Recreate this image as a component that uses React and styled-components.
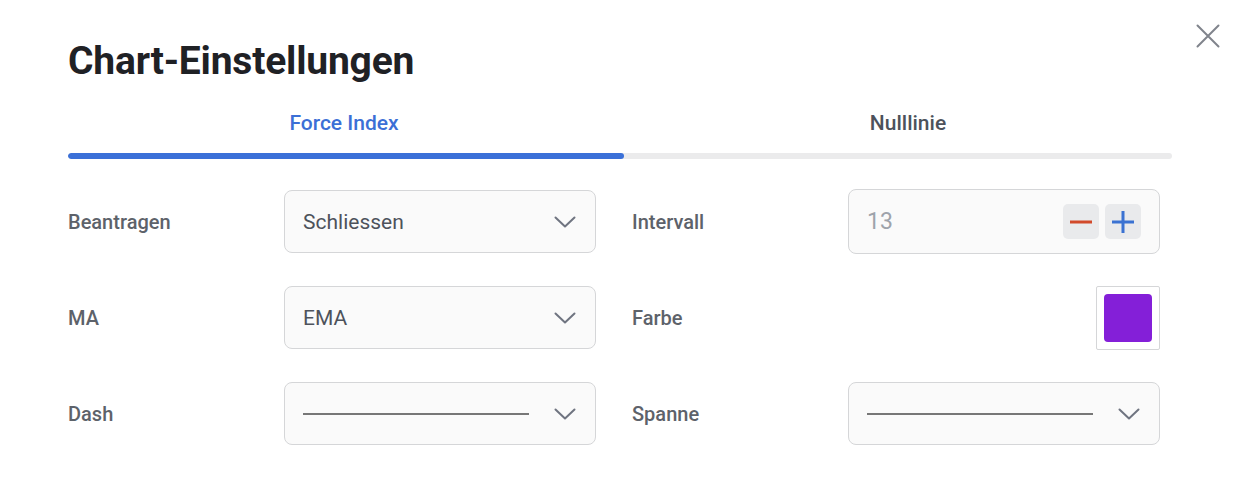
import React, { useState } from "react";
import styled, { createGlobalStyle } from "styled-components";

const GlobalStyle = createGlobalStyle`
  html, body {
    margin: 0;
    padding: 0;
    background: #ffffff;
  }
  body {
    font-family: Roboto, "Liberation Sans", Arial, sans-serif;
    -webkit-font-smoothing: antialiased;
  }
`;

const Dialog = styled.div`
  position: relative;
  width: 1240px;
  height: 500px;
  box-sizing: border-box;
  padding: 38px 68px 0 68px;
  background: #ffffff;
`;

const CloseButton = styled.button`
  position: absolute;
  top: 20px;
  right: 16px;
  width: 32px;
  height: 32px;
  padding: 0;
  border: none;
  background: transparent;
  display: flex;
  align-items: center;
  justify-content: center;
  cursor: pointer;
`;

const Title = styled.h1`
  margin: 0;
  font-size: 39px;
  line-height: 47px;
  font-weight: 700;
  color: #1f2125;
  letter-spacing: -0.2px;
`;

const Tabs = styled.div`
  margin-top: 26px;
  width: 1104px;
`;

const TabList = styled.div`
  display: grid;
  grid-template-columns: 1fr 1fr;
`;

const TabButton = styled.button`
  border: none;
  background: transparent;
  padding: 0 0 18px ${(p) => p.$shift || 0}px;
  font-family: inherit;
  font-size: 21px;
  line-height: 24px;
  font-weight: 500;
  color: ${(p) => (p.$active ? "#3b6fd6" : "#4d525b")};
  cursor: pointer;
  text-align: center;
`;

const Track = styled.div`
  height: 6px;
  border-radius: 3px;
  background: #ebebec;
  overflow: hidden;
`;

const Indicator = styled.div`
  height: 100%;
  border-radius: 3px;
  background: #3b70d8;
  transition: margin-left 0.2s;
`;

const Form = styled.div`
  margin-top: 30px;
  width: 1092px;
  display: grid;
  grid-template-columns: 1fr 1fr;
  column-gap: 36px;
  row-gap: 31px;
`;

const Field = styled.div`
  display: grid;
  grid-template-columns: 1fr 312px;
  align-items: center;
  height: 65px;
`;

const Label = styled.label`
  font-size: 20px;
  font-weight: 500;
  color: #5d626a;
`;

const SelectBox = styled.div`
  box-sizing: border-box;
  height: 63px;
  display: flex;
  align-items: center;
  justify-content: space-between;
  padding: 0 19px 0 18px;
  background: #fafafa;
  border: 1px solid #d5d6d8;
  border-radius: 8px;
  cursor: pointer;
`;

const SelectValue = styled.span`
  font-size: 21px;
  color: #4d525b;
`;

const DashLine = styled.span`
  display: block;
  width: 226px;
  height: 2px;
  background: #777777;
`;

const NumberBox = styled.div`
  box-sizing: border-box;
  height: 65px;
  display: flex;
  align-items: center;
  justify-content: space-between;
  padding: 0 18px 0 18px;
  background: #fafafa;
  border: 1px solid #d5d6d8;
  border-radius: 8px;
`;

const NumberValue = styled.span`
  font-size: 23px;
  color: #9ea3ab;
`;

const Stepper = styled.div`
  display: flex;
  gap: 6px;
`;

const StepButton = styled.button`
  width: 36px;
  height: 35px;
  padding: 0;
  border: none;
  border-radius: 5px;
  background: #e9eaec;
  display: flex;
  align-items: center;
  justify-content: center;
  cursor: pointer;
`;

const SwatchFrame = styled.div`
  justify-self: end;
  box-sizing: border-box;
  width: 64px;
  height: 64px;
  padding: 7px;
  border: 1px solid #d5d6d8;
  border-radius: 2px;
  background: #ffffff;
`;

const Swatch = styled.div`
  width: 100%;
  height: 100%;
  border-radius: 4px;
  background: ${(p) => p.$color};
`;

const Chevron = () => (
  <svg width="22" height="12" viewBox="0 0 22 12" fill="none">
    <path d="M1.5 1.5L11 10.5L20.5 1.5" stroke="#6f7480" strokeWidth="2" strokeLinecap="round" strokeLinejoin="round" />
  </svg>
);

const CloseIcon = () => (
  <svg width="24" height="24" viewBox="0 0 24 24" fill="none">
    <path d="M1.5 1.5L22.5 22.5M22.5 1.5L1.5 22.5" stroke="#80848c" strokeWidth="2" strokeLinecap="round" />
  </svg>
);

const Select = ({ value, dash }) => (
  <SelectBox>
    {dash ? <DashLine /> : <SelectValue>{value}</SelectValue>}
    <Chevron />
  </SelectBox>
);

const NumberInput = ({ value, onChange }) => (
  <NumberBox>
    <NumberValue>{value}</NumberValue>
    <Stepper>
      <StepButton onClick={() => onChange(value - 1)} aria-label="minus">
        <svg width="22" height="4" viewBox="0 0 22 4">
          <rect x="0" y="0.5" width="22" height="3" fill="#d24a2b" />
        </svg>
      </StepButton>
      <StepButton onClick={() => onChange(value + 1)} aria-label="plus">
        <svg width="22" height="22" viewBox="0 0 22 22">
          <rect x="0" y="9.5" width="22" height="3" fill="#3b72d2" />
          <rect x="9.5" y="0" width="3" height="22" fill="#3b72d2" />
        </svg>
      </StepButton>
    </Stepper>
  </NumberBox>
);

const tabs = ["Force Index", "Nulllinie"];

export default function App() {
  const [active, setActive] = useState(0);
  const [interval, setInterval] = useState(13);

  return (
    <>
      <GlobalStyle />
      <Dialog>
        <CloseButton aria-label="close">
          <CloseIcon />
        </CloseButton>
        <Title>Chart-Einstellungen</Title>
        <Tabs>
          <TabList>
            {tabs.map((tab, i) => (
              <TabButton
                key={tab}
                $active={i === active}
                $shift={i === 1 ? 24 : 0}
                onClick={() => setActive(i)}
              >
                {tab}
              </TabButton>
            ))}
          </TabList>
          <Track>
            <Indicator style={{ width: "50.4%", marginLeft: `${active * 49.6}%` }} />
          </Track>
        </Tabs>
        <Form>
          <Field>
            <Label>Beantragen</Label>
            <Select value="Schliessen" />
          </Field>
          <Field>
            <Label>Intervall</Label>
            <NumberInput value={interval} onChange={setInterval} />
          </Field>
          <Field>
            <Label>MA</Label>
            <Select value="EMA" />
          </Field>
          <Field>
            <Label>Farbe</Label>
            <SwatchFrame>
              <Swatch $color="#841fd8" />
            </SwatchFrame>
          </Field>
          <Field>
            <Label>Dash</Label>
            <Select dash />
          </Field>
          <Field>
            <Label>Spanne</Label>
            <Select dash />
          </Field>
        </Form>
      </Dialog>
    </>
  );
}
